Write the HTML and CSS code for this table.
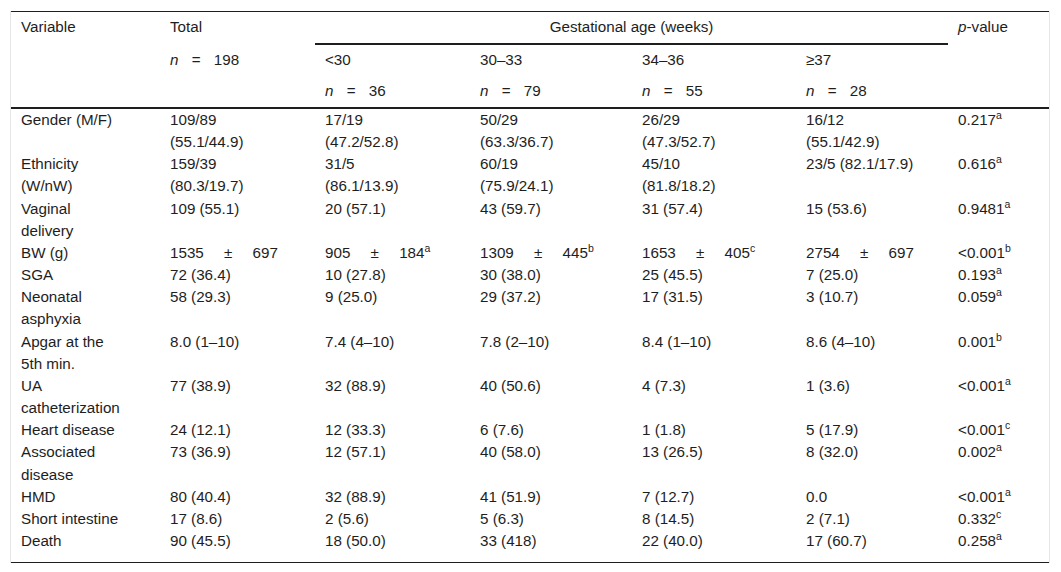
FILE: index.html
```html
<!DOCTYPE html>
<html lang="en">
<head>
<meta charset="utf-8">
<title>Table</title>
<link rel="stylesheet" href="styles.css">
</head>
<body>
<div class="wrap">
<table class="data">
<colgroup>
<col class="c1"><col class="c2"><col class="c3"><col class="c4"><col class="c5"><col class="c6"><col class="c7">
</colgroup>
<thead>
<tr class="h1">
<th rowspan="3" class="hb">Variable</th>
<th>Total</th>
<th colspan="4" class="group">Gestational age (weeks)</th>
<th rowspan="3" class="hb"><i>p</i>-value</th>
</tr>
<tr class="h2">
<th><i>n</i> <span class="eq">=</span> 198</th>
<th>&lt;30</th>
<th>30–33</th>
<th>34–36</th>
<th>≥37</th>
</tr>
<tr class="h3">
<th class="hb"></th>
<th class="hb"><i>n</i> <span class="eq">=</span> 36</th>
<th class="hb"><i>n</i> <span class="eq">=</span> 79</th>
<th class="hb"><i>n</i> <span class="eq">=</span> 55</th>
<th class="hb"><i>n</i> <span class="eq">=</span> 28</th>
</tr>
</thead>
<tbody>
<tr>
<td>Gender (M/F)</td><td>109/89<br>(55.1/44.9)</td><td>17/19<br>(47.2/52.8)</td><td>50/29<br>(63.3/36.7)</td><td>26/29<br>(47.3/52.7)</td><td>16/12<br>(55.1/42.9)</td><td>0.217<sup>a</sup></td>
</tr>
<tr>
<td>Ethnicity<br>(W/nW)</td><td>159/39<br>(80.3/19.7)</td><td>31/5<br>(86.1/13.9)</td><td>60/19<br>(75.9/24.1)</td><td>45/10<br>(81.8/18.2)</td><td>23/5 (82.1/17.9)</td><td>0.616<sup>a</sup></td>
</tr>
<tr>
<td>Vaginal<br>delivery</td><td>109 (55.1)</td><td>20 (57.1)</td><td>43 (59.7)</td><td>31 (57.4)</td><td>15 (53.6)</td><td>0.9481<sup>a</sup></td>
</tr>
<tr>
<td>BW (g)</td><td>1535 <span class="pm">±</span> 697</td><td>905 <span class="pm">±</span> 184<sup>a</sup></td><td>1309 <span class="pm">±</span> 445<sup>b</sup></td><td>1653 <span class="pm">±</span> 405<sup>c</sup></td><td>2754 <span class="pm">±</span> 697</td><td>&lt;0.001<sup>b</sup></td>
</tr>
<tr>
<td>SGA</td><td>72 (36.4)</td><td>10 (27.8)</td><td>30 (38.0)</td><td>25 (45.5)</td><td>7 (25.0)</td><td>0.193<sup>a</sup></td>
</tr>
<tr>
<td>Neonatal<br>asphyxia</td><td>58 (29.3)</td><td>9 (25.0)</td><td>29 (37.2)</td><td>17 (31.5)</td><td>3 (10.7)</td><td>0.059<sup>a</sup></td>
</tr>
<tr>
<td>Apgar at the<br>5th min.</td><td>8.0 (1–10)</td><td>7.4 (4–10)</td><td>7.8 (2–10)</td><td>8.4 (1–10)</td><td>8.6 (4–10)</td><td>0.001<sup>b</sup></td>
</tr>
<tr>
<td>UA<br>catheterization</td><td>77 (38.9)</td><td>32 (88.9)</td><td>40 (50.6)</td><td>4 (7.3)</td><td>1 (3.6)</td><td>&lt;0.001<sup>a</sup></td>
</tr>
<tr>
<td>Heart disease</td><td>24 (12.1)</td><td>12 (33.3)</td><td>6 (7.6)</td><td>1 (1.8)</td><td>5 (17.9)</td><td>&lt;0.001<sup>c</sup></td>
</tr>
<tr>
<td>Associated<br>disease</td><td>73 (36.9)</td><td>12 (57.1)</td><td>40 (58.0)</td><td>13 (26.5)</td><td>8 (32.0)</td><td>0.002<sup>a</sup></td>
</tr>
<tr>
<td>HMD</td><td>80 (40.4)</td><td>32 (88.9)</td><td>41 (51.9)</td><td>7 (12.7)</td><td>0.0</td><td>&lt;0.001<sup>a</sup></td>
</tr>
<tr>
<td>Short intestine</td><td>17 (8.6)</td><td>2 (5.6)</td><td>5 (6.3)</td><td>8 (14.5)</td><td>2 (7.1)</td><td>0.332<sup>c</sup></td>
</tr>
<tr class="last">
<td>Death</td><td>90 (45.5)</td><td>18 (50.0)</td><td>33 (418)</td><td>22 (40.0)</td><td>17 (60.7)</td><td>0.258<sup>a</sup></td>
</tr>
</tbody>
</table>
</div>
</body>
</html>
```

FILE: styles.css
```css
html, body {
  margin: 0;
  padding: 0;
  background: #ffffff;
}

body {
  padding: 11px 0 0 10px;
  font-family: "Liberation Sans", Arial, sans-serif;
  font-size: 15.2px;
  line-height: 22px;
  color: #1e1e1e;
}

.wrap {
  display: inline-block;
  border-left: 1px solid #e6e6e6;
  border-right: 1px solid #e6e6e6;
}

.data {
  table-layout: fixed;
  width: 1038px;
  border-collapse: separate;
  border-spacing: 0;
  border-top: 1px solid #1e1e1e;
  border-bottom: 1px solid #1e1e1e;
}

.c1 { width: 149px; }
.c2 { width: 155px; }
.c3 { width: 155px; }
.c4 { width: 162px; }
.c5 { width: 164px; }
.c6 { width: 152px; }
.c7 { width: 101px; }

.data th,
.data td {
  text-align: left;
  vertical-align: top;
  font-weight: normal;
  white-space: nowrap;
  padding: 0 10px;
}

.data td {
  line-height: 22.15px;
}

.data th {
  padding-top: 4px;
  padding-bottom: 5px;
}

.data th.group {
  text-align: center;
  border-bottom: 2px solid #1e1e1e;
}

.data th.hb {
  border-bottom: 2px solid #1e1e1e;
}

.data tr.last td {
  padding-bottom: 10px;
}

.eq {
  margin: 0 9px;
}

.pm {
  margin: 0 16px;
}

sup {
  font-size: 10.5px;
  line-height: 0;
  vertical-align: 6px;
}
```
